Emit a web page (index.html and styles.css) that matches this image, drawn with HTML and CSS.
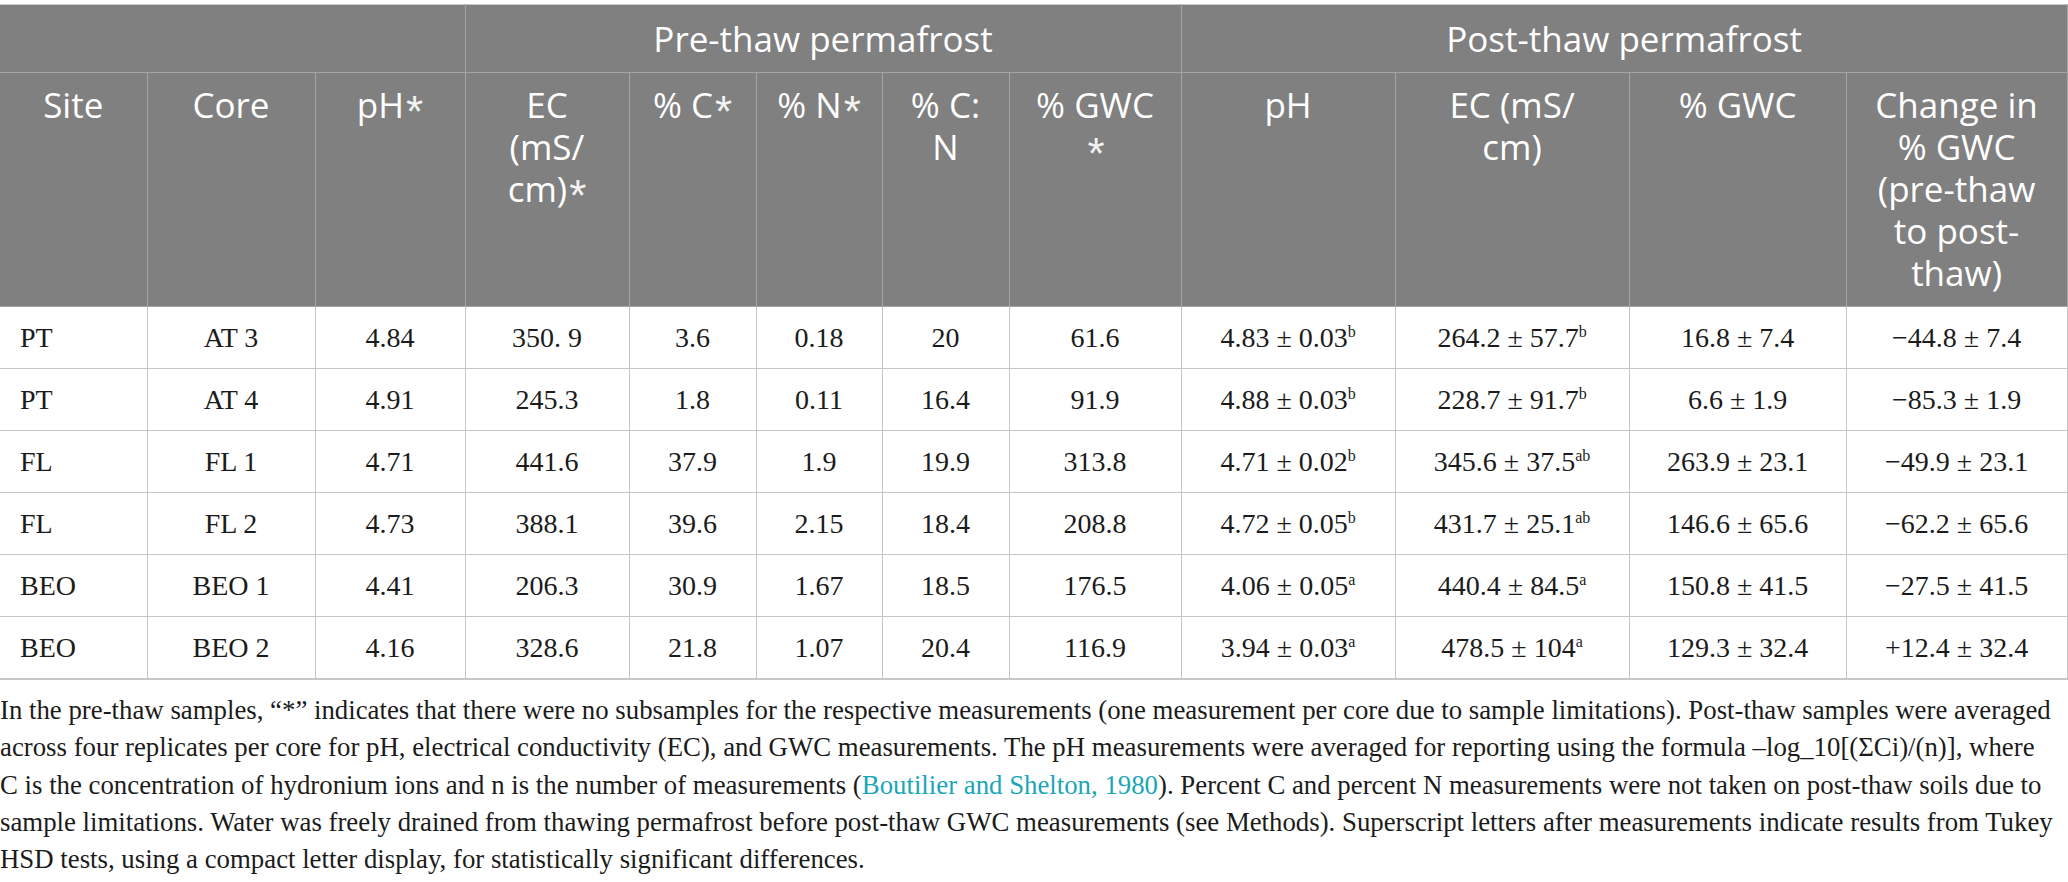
FILE: index.html
```html
<!DOCTYPE html>
<html lang="en">
<head>
<meta charset="utf-8">
<title>Permafrost table</title>
<link rel="stylesheet" href="styles.css">
</head>
<body>
<div class="wrap">
<table class="data-table">
  <colgroup>
    <col class="c-site"><col class="c-core"><col class="c-ph"><col class="c-ec"><col class="c-pc"><col class="c-pn"><col class="c-cn"><col class="c-gwc"><col class="c-ph2"><col class="c-ec2"><col class="c-gwc2"><col class="c-chg">
  </colgroup>
  <thead>
    <tr class="group-row">
      <th colspan="3"></th>
      <th colspan="5">Pre-thaw permafrost</th>
      <th colspan="4">Post-thaw permafrost</th>
    </tr>
    <tr class="label-row">
      <th>Site</th>
      <th>Core</th>
      <th>pH<span class="ast">*</span></th>
      <th>EC<br>(mS/<br>cm)<span class="ast">*</span></th>
      <th>% C<span class="ast">*</span></th>
      <th>% N<span class="ast">*</span></th>
      <th>% C:<br>N</th>
      <th>% GWC<br><span class="ast">*</span></th>
      <th>pH</th>
      <th>EC (mS/<br>cm)</th>
      <th>% GWC</th>
      <th>Change in<br>% GWC<br>(pre-thaw<br>to post-<br>thaw)</th>
    </tr>
  </thead>
  <tbody>
    <tr>
      <td class="site">PT</td><td>AT 3</td><td>4.84</td><td>350. 9</td><td>3.6</td><td>0.18</td><td>20</td><td>61.6</td>
      <td>4.83 ± 0.03<sup>b</sup></td><td>264.2 ± 57.7<sup>b</sup></td><td>16.8 ± 7.4</td><td>−44.8 ± 7.4</td>
    </tr>
    <tr>
      <td class="site">PT</td><td>AT 4</td><td>4.91</td><td>245.3</td><td>1.8</td><td>0.11</td><td>16.4</td><td>91.9</td>
      <td>4.88 ± 0.03<sup>b</sup></td><td>228.7 ± 91.7<sup>b</sup></td><td>6.6 ± 1.9</td><td>−85.3 ± 1.9</td>
    </tr>
    <tr>
      <td class="site">FL</td><td>FL 1</td><td>4.71</td><td>441.6</td><td>37.9</td><td>1.9</td><td>19.9</td><td>313.8</td>
      <td>4.71 ± 0.02<sup>b</sup></td><td>345.6 ± 37.5<sup>ab</sup></td><td>263.9 ± 23.1</td><td>−49.9 ± 23.1</td>
    </tr>
    <tr>
      <td class="site">FL</td><td>FL 2</td><td>4.73</td><td>388.1</td><td>39.6</td><td>2.15</td><td>18.4</td><td>208.8</td>
      <td>4.72 ± 0.05<sup>b</sup></td><td>431.7 ± 25.1<sup>ab</sup></td><td>146.6 ± 65.6</td><td>−62.2 ± 65.6</td>
    </tr>
    <tr>
      <td class="site">BEO</td><td>BEO 1</td><td>4.41</td><td>206.3</td><td>30.9</td><td>1.67</td><td>18.5</td><td>176.5</td>
      <td>4.06 ± 0.05<sup>a</sup></td><td>440.4 ± 84.5<sup>a</sup></td><td>150.8 ± 41.5</td><td>−27.5 ± 41.5</td>
    </tr>
    <tr>
      <td class="site">BEO</td><td>BEO 2</td><td>4.16</td><td>328.6</td><td>21.8</td><td>1.07</td><td>20.4</td><td>116.9</td>
      <td>3.94 ± 0.03<sup>a</sup></td><td>478.5 ± 104<sup>a</sup></td><td>129.3 ± 32.4</td><td>+12.4 ± 32.4</td>
    </tr>
  </tbody>
</table>
<p class="footnote">In the pre-thaw samples, “*” indicates that there were no subsamples for the respective measurements (one measurement per core due to sample limitations). Post-thaw samples were averaged across four replicates per core for pH, electrical conductivity (EC), and GWC measurements. The pH measurements were averaged for reporting using the formula –log_10[(ΣCi)/(n)], where C&nbsp;is the concentration of hydronium ions and n is the number of measurements (<a class="ref" href="#">Boutilier and Shelton, 1980</a>). Percent C and percent N measurements were not taken on post-thaw soils due to sample limitations. Water was freely drained from thawing permafrost before post-thaw GWC measurements (see Methods). Superscript letters after measurements indicate results from Tukey HSD tests, using a compact letter display, for statistically significant differences.</p>
</div>
</body>
</html>
```
FILE: styles.css
```css
html, body {
  margin: 0;
  padding: 0;
  background: #ffffff;
}

.wrap {
  padding-top: 4px;
  width: 2067px;
}

.data-table {
  width: 2067px;
  border-collapse: collapse;
  table-layout: fixed;
  border-top: 1px solid #c9c9c9;
}

.c-site { width: 147px; }
.c-core { width: 168px; }
.c-ph { width: 150px; }
.c-ec { width: 164px; }
.c-pc { width: 127px; }
.c-pn { width: 126px; }
.c-cn { width: 127px; }
.c-gwc { width: 172px; }
.c-ph2 { width: 214px; }
.c-ec2 { width: 234px; }
.c-gwc2 { width: 217px; }
.c-chg { width: 221px; }

.data-table th {
  background: #7f807f;
  color: #ffffff;
  font-family: "Open Sans", "Noto Sans", sans-serif;
  font-weight: 400;
  font-size: 35px;
  line-height: 42px;
  text-align: center;
  border: 1px solid #a3a4a3;
  padding: 0 8px;
}

.data-table thead tr:first-child th {
  border-top: none;
}

.data-table th:first-child {
  border-left: none;
}

.group-row th {
  height: 67px;
  vertical-align: middle;
}

.label-row th {
  vertical-align: top;
  padding-top: 11px;
  padding-bottom: 12px;
}

.ast {
  font-family: "Liberation Sans", "Open Sans", sans-serif;
  font-weight: 400;
  font-size: 44px;
  line-height: 0;
  position: relative;
  top: 9px;
  margin-left: 2px;
  color: #f2f2f2;
}

.data-table td {
  font-family: "Liberation Serif", "Times New Roman", serif;
  font-size: 28px;
  color: #1b1b1b;
  text-align: center;
  vertical-align: middle;
  height: 61px;
  padding: 0 6px;
  border: 1px solid #c6c6c6;
  white-space: nowrap;
}

.data-table td:first-child {
  border-left: none;
}

.data-table td.site {
  text-align: left;
  padding-left: 20px;
}

.data-table tbody tr:last-child td {
  border-bottom: 2px solid #c6c6c6;
}

.data-table sup {
  font-size: 16px;
  line-height: 0;
  vertical-align: 10px;
}

.footnote {
  margin: 12px 0 0 0;
  font-family: "Liberation Serif", "Times New Roman", serif;
  font-size: 26.8px;
  line-height: 37.3px;
  color: #1b1b1b;
}

.ref {
  color: #1aa6b7;
  text-decoration: none;
}
```
